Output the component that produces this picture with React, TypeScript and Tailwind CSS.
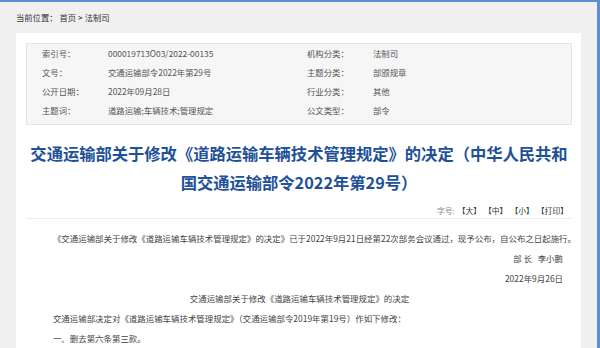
import React from 'react';

const FONT = { fontFamily: '"Noto Sans CJK SC", "Noto Sans", sans-serif' };

const META = [
  ['索引号：', '000019713O03/2022-00135', '机构分类：', '法制司'],
  ['文号：', '交通运输部令2022年第29号', '主题分类：', '部颁规章'],
  ['公开日期：', '2022年09月28日', '行业分类：', '其他'],
  ['主题词：', '道路运输;车辆技术;管理规定', '公文类型：', '部令'],
];

export default function App() {
  return (
    <div className="w-[600px] h-[348px] overflow-hidden flex flex-col bg-[#f0f0f0] text-[#444]" style={FONT}>
      <div className="h-[2px] shrink-0 bg-[#5b8fd9]" />
      <div className="flex flex-1 min-h-0">
        <div className="flex-1 min-w-0 flex flex-col">
          {/* Breadcrumb */}
          <div className="h-[31px] shrink-0 pl-4 flex items-center text-[8.3px] text-[#333]">
            <span>当前位置：</span>
            <span className="ml-[2px]">首页</span>
            <span className="mx-[2px]">&gt;</span>
            <span>法制司</span>
          </div>

          {/* Panel */}
          <div className="flex-1 ml-4 mr-4 bg-white pl-[10px] pr-[9px] pt-[10px]">
            <div className="border border-[#e4e4e4] bg-[#f6f6f6] pl-[15px] pb-[4px] text-[8.4px] text-[#555]">
              {META.map((row) => (
                <div key={row[0]} className="grid grid-cols-[66px_199px_66px_1fr] h-[19px] items-center">
                  <span>{row[0]}</span>
                  <span>{row[1]}</span>
                  <span>{row[2]}</span>
                  <span>{row[3]}</span>
                </div>
              ))}
            </div>

            <div className="border-b border-[#ececec]">
              <h1 className="mt-[14px] text-center font-bold text-[16.3px] leading-[29px] text-[#1e5198] whitespace-nowrap">
                <span className="block">交通运输部关于修改《道路运输车辆技术管理规定》的决定（中华人民共和</span>
                <span className="block">国交通运输部令2022年第29号）</span>
              </h1>
              <div className="mt-[6px] h-[15px] pr-[4px] flex justify-end items-center gap-[3px] text-[7.8px] text-[#333]">
                <span className="text-[#888]">字号:</span>
                <span>【大】</span>
                <span>【中】</span>
                <span>【小】</span>
                <span>【打印】</span>
              </div>
            </div>

            <div className="pt-[9px] pl-[10px] pr-[9px] text-[8.45px] leading-[20px] text-[#444]">
              <p className="indent-[2em] whitespace-nowrap">
                《交通运输部关于修改《道路运输车辆技术管理规定》的决定》已于2022年9月21日经第22次部务会议通过，现予公布，自公布之日起施行。
              </p>
              <p className="text-right">部&nbsp;长&nbsp;&nbsp;&nbsp;李小鹏</p>
              <p className="text-right">2022年9月26日</p>
              <p className="text-center">交通运输部关于修改《道路运输车辆技术管理规定》的决定</p>
              <p className="indent-[2em] whitespace-nowrap">
                交通运输部决定对《道路运输车辆技术管理规定》（交通运输部令2019年第19号）作如下修改：
              </p>
              <p className="indent-[2em]">一、删去第六条第三款。</p>
            </div>
          </div>
        </div>
        <div className="w-[3px] shrink-0 bg-[#5b8fd9]" />
      </div>
    </div>
  );
}
